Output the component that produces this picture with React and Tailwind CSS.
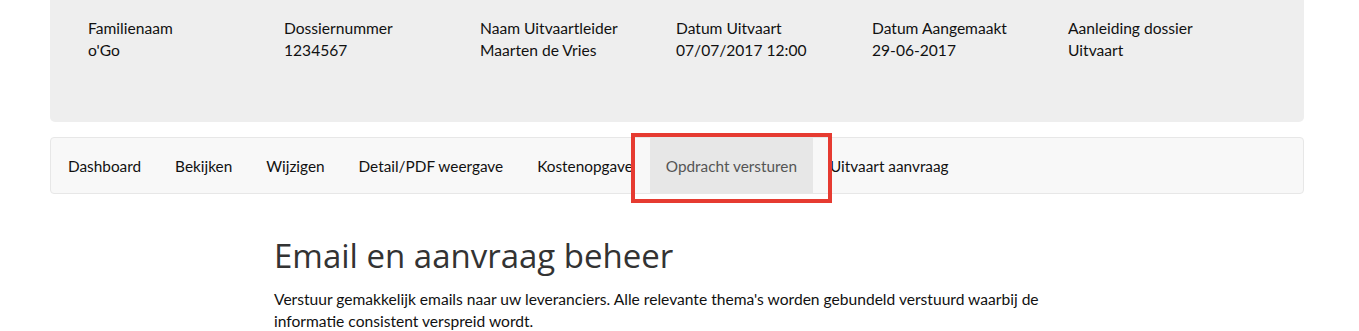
export default function App() {
  const info = [
    ["Familienaam", "o'Go"],
    ["Dossiernummer", "1234567"],
    ["Naam Uitvaartleider", "Maarten de Vries"],
    ["Datum Uitvaart", "07/07/2017 12:00"],
    ["Datum Aangemaakt", "29-06-2017"],
    ["Aanleiding dossier", "Uitvaart"],
  ];
  const tabs = ["Dashboard", "Bekijken", "Wijzigen", "Detail/PDF weergave", "Kostenopgave", "Opdracht versturen", "Uitvaart aanvraag"];

  return (
    <div className="min-h-[331px] bg-white text-[15.6px] leading-[22px] text-[#111]" style={{ fontFamily: "Lato, 'Open Sans', sans-serif" }}>
      <div className="ml-[50px] w-[1254px]">
        {/* dossier info */}
        <div className="flex h-[122px] rounded-b-[5px] bg-[#eeeeee] pl-[38px] pt-[17px]">
          {info.map(([label, value]) => (
            <div key={label} className="w-[196px]">
              <div>{label}</div>
              <div>{value}</div>
            </div>
          ))}
        </div>

        {/* tabs */}
        <div className="mt-[15px] flex h-[57px] rounded-[4px] border border-[#e7e7e7] bg-[#f8f8f8] text-[15.35px]">
          {tabs.map((tab) => (
            tab === "Opdracht versturen" ? (
              <div key={tab} className="relative flex items-center bg-[#e7e7e7] px-[16px] text-[#555]">
                {tab}
                <div className="pointer-events-none absolute -top-[5px] -bottom-[10px] -left-[19px] -right-[19px] border-4 border-[#e63b31]"></div>
              </div>
            ) : (
              <div key={tab} className="flex items-center px-[17px]">{tab}</div>
            )
          ))}
        </div>

        {/* content */}
        <div className="mx-auto w-[806px] pt-[40px]">
          <h1 className="text-[33px] leading-[44px] text-[#333]" style={{ fontFamily: "'Open Sans', sans-serif" }}>Email en aanvraag beheer</h1>
          <p className="mt-[10px]">Verstuur gemakkelijk emails naar uw leveranciers. Alle relevante thema's worden gebundeld verstuurd waarbij de informatie consistent verspreid wordt.</p>
        </div>
      </div>
    </div>
  );
}
